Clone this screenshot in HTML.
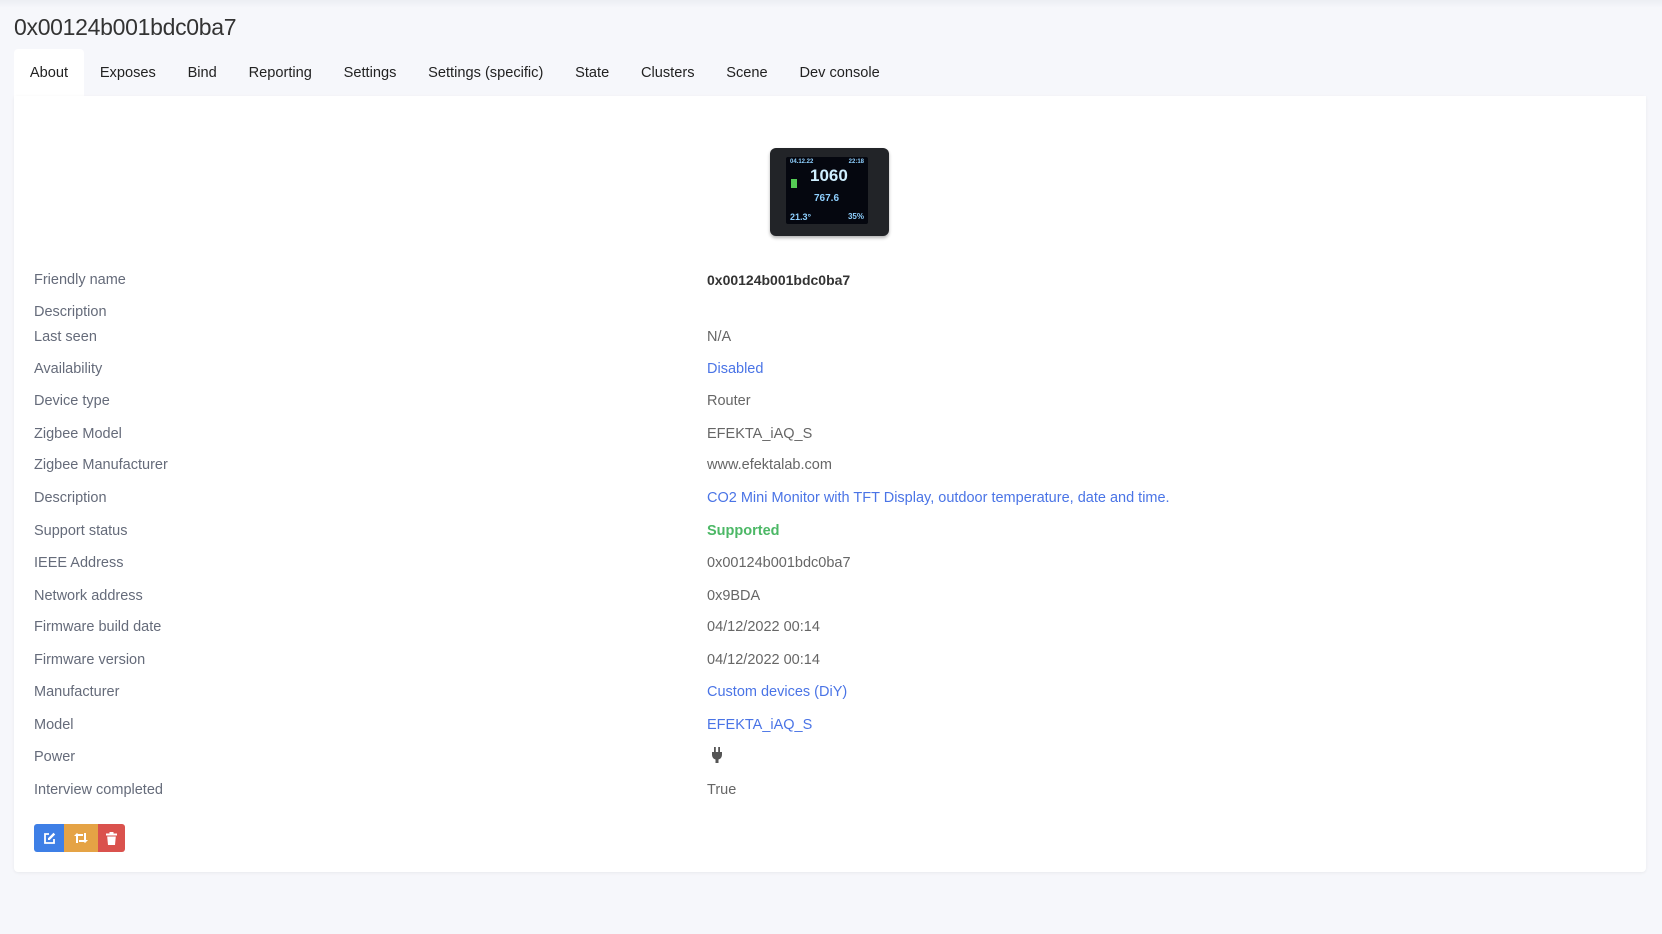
<!DOCTYPE html>
<html><head><meta charset="utf-8"><style>
*{box-sizing:border-box;margin:0;padding:0}
body{width:1662px;height:934px;background:#f6f7fb;font-family:"Liberation Sans",sans-serif;color:#555;position:relative;overflow:hidden}
.topshade{position:absolute;left:0;top:0;width:1662px;height:8px;background:linear-gradient(#eceef3,#f6f7fb)}
h1{position:absolute;left:14px;top:14px;font-size:23px;font-weight:normal;color:#333;letter-spacing:-0.3px}
.tabs{position:absolute;left:14px;top:49px;height:47px;display:flex}
.tab{padding:0 15.9px;font-size:14.6px;color:#222;line-height:49px;white-space:nowrap}
.tab.active{background:#fff;border-radius:4px 4px 0 0}
.card{position:absolute;left:14px;top:96px;width:1632px;height:776px;background:#fff;border-radius:0 0 4px 4px;box-shadow:0 1px 3px rgba(0,0,0,.06)}
.row{position:absolute;font-size:14.5px;white-space:nowrap;margin-top:2.5px}
.l{left:34px;color:#656b7a}
.v{left:707px;color:#666}
.b{color:#4a74e6}.g{color:#4cb866;font-weight:bold}
.dev{position:absolute;left:770px;top:148px;width:119px;height:88px;background:#222428;border-radius:6px;box-shadow:0 2px 3px rgba(0,0,0,.3)}
.scr{position:absolute;left:16px;top:9px;width:82px;height:67px;background:#05070f;border-radius:2px;font-family:"Liberation Sans",sans-serif;color:#8fd0ff;font-weight:bold}
.btns{position:absolute;left:34px;top:824px;height:28px;display:flex;border-radius:3px;overflow:hidden}
.btns div{height:28px;display:flex;align-items:center;justify-content:center}
</style></head><body>
<div class="topshade"></div>
<h1>0x00124b001bdc0ba7</h1>
<div class="tabs">
<div class="tab active">About</div><div class="tab">Exposes</div><div class="tab">Bind</div><div class="tab">Reporting</div><div class="tab">Settings</div><div class="tab">Settings (specific)</div><div class="tab">State</div><div class="tab">Clusters</div><div class="tab">Scene</div><div class="tab">Dev console</div>
</div>
<div class="card"></div>
<div class="dev"><div class="scr">
<div style="position:absolute;left:4px;top:2px;font-size:6px">04.12.22</div>
<div style="position:absolute;right:4px;top:2px;font-size:6px">22:18</div>
<div style="position:absolute;left:24px;top:9px;font-size:17px;color:#cfefff">1060</div>
<div style="position:absolute;left:5px;top:22px;width:6px;height:9px;background:#5c5"></div>
<div style="position:absolute;left:28px;top:36px;font-size:10px">767.6</div>
<div style="position:absolute;left:4px;top:55px;font-size:9px">21.3°</div>
<div style="position:absolute;right:4px;top:55px;font-size:8px">35%</div>
</div></div>
<div class="row l" style="top:269px">Friendly name</div><div class="row v" style="top:269px;color:#333;font-weight:bold;font-size:14px">0x00124b001bdc0ba7</div>
<div class="row l" style="top:301px">Description</div>
<div class="row l" style="top:326px">Last seen</div><div class="row v" style="top:326px">N/A</div>
<div class="row l" style="top:358px">Availability</div><div class="row v b" style="top:358px">Disabled</div>
<div class="row l" style="top:390px">Device type</div><div class="row v" style="top:390px">Router</div>
<div class="row l" style="top:423px">Zigbee Model</div><div class="row v" style="top:423px">EFEKTA_iAQ_S</div>
<div class="row l" style="top:454px">Zigbee Manufacturer</div><div class="row v" style="top:454px">www.efektalab.com</div>
<div class="row l" style="top:487px">Description</div><div class="row v b" style="top:487px">CO2 Mini Monitor with TFT Display, outdoor temperature, date and time.</div>
<div class="row l" style="top:520px">Support status</div><div class="row v g" style="top:520px">Supported</div>
<div class="row l" style="top:552px">IEEE Address</div><div class="row v" style="top:552px">0x00124b001bdc0ba7</div>
<div class="row l" style="top:585px">Network address</div><div class="row v" style="top:585px">0x9BDA</div>
<div class="row l" style="top:616px">Firmware build date</div><div class="row v" style="top:616px">04/12/2022 00:14</div>
<div class="row l" style="top:649px">Firmware version</div><div class="row v" style="top:649px">04/12/2022 00:14</div>
<div class="row l" style="top:681px">Manufacturer</div><div class="row v b" style="top:681px">Custom devices (DiY)</div>
<div class="row l" style="top:714px">Model</div><div class="row v b" style="top:714px">EFEKTA_iAQ_S</div>
<div class="row l" style="top:746px">Power</div>
<svg style="position:absolute;left:711px;top:747px" width="12" height="16" viewBox="0 0 12 16"><rect x="3" y="0" width="1.8" height="5" fill="#555"/><rect x="7.2" y="0" width="1.8" height="5" fill="#555"/><path d="M1 5h10v3a5 5 0 0 1-3.5 4.5V16h-3v-3.5A5 5 0 0 1 1 8z" fill="#555"/></svg>
<div class="row l" style="top:779px">Interview completed</div><div class="row v" style="top:779px">True</div>
<div class="btns">
<div style="width:30px;background:#3e7fe6"><svg width="13" height="13" viewBox="0 0 13 13"><path d="M6 2H2v9h9V7" fill="none" stroke="#fff" stroke-width="1.8"/><path d="M10.5 0.8l1.7 1.7-5.5 5.5H5V6.3z" fill="#fff"/></svg></div>
<div style="width:34px;background:#e5a345"><svg width="14" height="12" viewBox="0 0 14 12"><path d="M3 11V3h6M11 1v8H5" fill="none" stroke="#fff" stroke-width="2"/><path d="M0 4l3-3 3 3zM8 8l3 3 3-3z" fill="#fff"/></svg></div>
<div style="width:27px;background:#da524d"><svg width="11" height="13" viewBox="0 0 11 13"><rect x="0" y="1.5" width="11" height="2" fill="#fff"/><rect x="3.5" y="0" width="4" height="2" fill="#fff"/><path d="M1.2 4.5h8.6l-.8 8.5H2z" fill="#fff"/></svg></div>
</div>
</body></html>
